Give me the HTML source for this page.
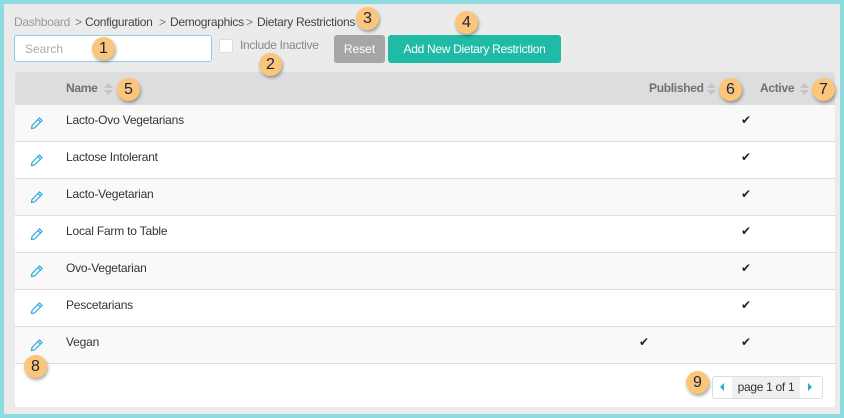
<!DOCTYPE html>
<html><head><style>
*{box-sizing:border-box;margin:0;padding:0}
body{width:844px;height:418px;background:#8ddde0;font-family:"Liberation Sans",sans-serif;position:relative;overflow:hidden;color:#333}
.wrap{position:absolute;left:4px;top:4px;width:836px;height:410px;background:#ebebeb}
.a{position:absolute;white-space:nowrap}
.bc{font-size:12px;top:11px;color:#444;letter-spacing:-0.3px}
.badge{position:absolute;width:23px;height:23px;border-radius:50%;background:#fbc57a;box-shadow:1px 2px 3px rgba(0,0,0,.35);color:#1a2540;font-size:16px;text-align:center;line-height:23px}
.panel{position:absolute;left:11px;top:68px;width:820px;height:335px;background:#fff;border-radius:3px}
.hdr{position:absolute;left:0;top:0;width:820px;height:33px;background:#dddddd;border-radius:3px 3px 0 0}
.hdr span{position:absolute;top:9px;font-size:12px;font-weight:bold;color:#707070;letter-spacing:-0.3px}
.sort{position:absolute;top:10px;width:9px;height:14px}
.row{position:absolute;left:0;width:820px;height:37px;border-bottom:1px solid #ddd}
.row .n{position:absolute;left:51px;top:8px;font-size:12px;color:#333;letter-spacing:-0.2px}
.row .ck{position:absolute;top:8px;font-size:12px;color:#222}
.pen{position:absolute;left:15px;top:11px}
</style></head><body>
<div class="wrap">
<div class="a bc" style="left:10px;color:#999">Dashboard</div>
<div class="a bc" style="left:71px;color:#777">&gt;</div>
<div class="a bc" style="left:81px">Configuration</div>
<div class="a bc" style="left:155px;color:#777">&gt;</div>
<div class="a bc" style="left:166px">Demographics</div>
<div class="a bc" style="left:242px;color:#777">&gt;</div>
<div class="a bc" style="left:253px">Dietary Restrictions</div>
<div class="a" style="left:10px;top:31px;width:198px;height:27px;background:#fff;border:1px solid #8ccfe0;border-radius:3px;font-size:12px;color:#aaa;padding:6px 10px">Search</div>
<div class="a" style="left:215px;top:35px;width:14px;height:14px;background:#fff;border:1px solid #ddd"></div>
<div class="a" style="left:236px;top:34px;font-size:12px;color:#888;letter-spacing:-0.3px">Include Inactive</div>
<div class="a" style="left:330px;top:31px;width:51px;height:28px;background:#a4a6a8;border-radius:3px;color:#fff;font-size:12px;text-align:center;line-height:28px">Reset</div>
<div class="a" style="left:384px;top:31px;width:173px;height:28px;background:#1fbba6;border-radius:3px;color:#fff;font-size:12px;text-align:center;line-height:28px;letter-spacing:-0.3px">Add New Dietary Restriction</div>
<div class="panel">
<div class="hdr">
<span style="left:51px">Name</span>
<span style="left:634px">Published</span>
<span style="left:745px">Active</span>
<svg class="sort" style="left:89px" viewBox="0 0 9 14"><path d="M0 6L4.5 1 9 6z M0 8L4.5 13 9 8z" fill="#c4c4c4"/></svg>
<svg class="sort" style="left:692px" viewBox="0 0 9 14"><path d="M0 6L4.5 1 9 6z M0 8L4.5 13 9 8z" fill="#c4c4c4"/></svg>
<svg class="sort" style="left:785px" viewBox="0 0 9 14"><path d="M0 6L4.5 1 9 6z M0 8L4.5 13 9 8z" fill="#c4c4c4"/></svg>
</div>
<div class="row" style="top:33px;background:#f9f9f9"><svg class="pen" width="14" height="14" viewBox="0 0 14 14"><path d="M1.5 12.5L2 9.5 9.5 2 12 4.5 4.5 12z M8 3.5l2.5 2.5" fill="none" stroke="#2aa8d8" stroke-width="1.2"/></svg><span class="n">Lacto-Ovo Vegetarians</span><span class="ck" style="left:726px">✔</span></div>
<div class="row" style="top:70px"><svg class="pen" width="14" height="14" viewBox="0 0 14 14"><path d="M1.5 12.5L2 9.5 9.5 2 12 4.5 4.5 12z M8 3.5l2.5 2.5" fill="none" stroke="#2aa8d8" stroke-width="1.2"/></svg><span class="n">Lactose Intolerant</span><span class="ck" style="left:726px">✔</span></div>
<div class="row" style="top:107px;background:#f9f9f9"><svg class="pen" width="14" height="14" viewBox="0 0 14 14"><path d="M1.5 12.5L2 9.5 9.5 2 12 4.5 4.5 12z M8 3.5l2.5 2.5" fill="none" stroke="#2aa8d8" stroke-width="1.2"/></svg><span class="n">Lacto-Vegetarian</span><span class="ck" style="left:726px">✔</span></div>
<div class="row" style="top:144px"><svg class="pen" width="14" height="14" viewBox="0 0 14 14"><path d="M1.5 12.5L2 9.5 9.5 2 12 4.5 4.5 12z M8 3.5l2.5 2.5" fill="none" stroke="#2aa8d8" stroke-width="1.2"/></svg><span class="n">Local Farm to Table</span><span class="ck" style="left:726px">✔</span></div>
<div class="row" style="top:181px;background:#f9f9f9"><svg class="pen" width="14" height="14" viewBox="0 0 14 14"><path d="M1.5 12.5L2 9.5 9.5 2 12 4.5 4.5 12z M8 3.5l2.5 2.5" fill="none" stroke="#2aa8d8" stroke-width="1.2"/></svg><span class="n">Ovo-Vegetarian</span><span class="ck" style="left:726px">✔</span></div>
<div class="row" style="top:218px"><svg class="pen" width="14" height="14" viewBox="0 0 14 14"><path d="M1.5 12.5L2 9.5 9.5 2 12 4.5 4.5 12z M8 3.5l2.5 2.5" fill="none" stroke="#2aa8d8" stroke-width="1.2"/></svg><span class="n">Pescetarians</span><span class="ck" style="left:726px">✔</span></div>
<div class="row" style="top:255px;background:#f9f9f9"><svg class="pen" width="14" height="14" viewBox="0 0 14 14"><path d="M1.5 12.5L2 9.5 9.5 2 12 4.5 4.5 12z M8 3.5l2.5 2.5" fill="none" stroke="#2aa8d8" stroke-width="1.2"/></svg><span class="n">Vegan</span><span class="ck" style="left:624px">✔</span><span class="ck" style="left:726px">✔</span></div>
<div class="a" style="left:697px;top:304px;width:111px;height:23px;border:1px solid #ddd;border-radius:3px;background:#fff"></div>
<div class="a" style="left:717px;top:305px;width:68px;height:21px;background:#f0f0f0;font-size:12px;line-height:21px;text-align:center;color:#333;letter-spacing:-0.3px">page 1 of 1</div>
<svg class="a" style="left:704px;top:311px" width="6" height="8"><path d="M5 0L1 4 5 8z" fill="#2aa8d8"/></svg>
<svg class="a" style="left:792px;top:311px" width="6" height="8"><path d="M1 0L5 4 1 8z" fill="#2aa8d8"/></svg>
</div>
</div>
<div class="badge" style="left:92px;top:37px">1</div>
<div class="badge" style="left:259px;top:53px">2</div>
<div class="badge" style="left:356px;top:7px">3</div>
<div class="badge" style="left:455px;top:11px">4</div>
<div class="badge" style="left:117px;top:78px">5</div>
<div class="badge" style="left:719px;top:78px">6</div>
<div class="badge" style="left:812px;top:78px">7</div>
<div class="badge" style="left:24px;top:355px">8</div>
<div class="badge" style="left:686px;top:371px">9</div>
</body></html>
